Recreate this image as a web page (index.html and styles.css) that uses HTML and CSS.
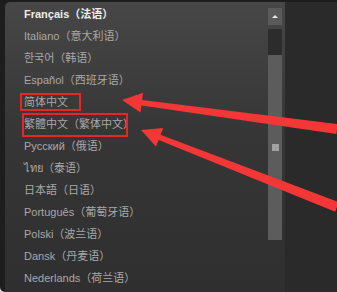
FILE: index.html
```html
<!DOCTYPE html>
<html lang="zh-CN">
<head>
<meta charset="utf-8">
<title>Language list</title>
<link rel="stylesheet" href="styles.css">
</head>
<body>
<div class="frame">
  <div class="panel">
    <ul class="list">
      <li class="item current">Français（法语）</li>
      <li class="item">Italiano（意大利语）</li>
      <li class="item">한국어（韩语）</li>
      <li class="item">Español（西班牙语）</li>
      <li class="item">简体中文</li>
      <li class="item">繁體中文（繁体中文）</li>
      <li class="item">Русский（俄语）</li>
      <li class="item">ไทย（泰语）</li>
      <li class="item">日本語（日语）</li>
      <li class="item">Português（葡萄牙语）</li>
      <li class="item">Polski（波兰语）</li>
      <li class="item">Dansk（丹麦语）</li>
      <li class="item">Nederlands（荷兰语）</li>
      <li class="item">Svenska（瑞典语）</li>
    </ul>
    <div class="scrollbar">
      <div class="sb-up"><span class="sb-arrow"></span></div>
      <div class="sb-track"></div>
      <div class="sb-thumb"><span class="grip"></span></div>
    </div>
  </div>
  <div class="side"></div>
</div>
<svg class="annot" width="337" height="292" viewBox="0 0 337 292">
  <rect x="21" y="94" width="59" height="16" fill="none" stroke="#ec2424" stroke-width="2"/>
  <rect x="23" y="114" width="104" height="22" fill="none" stroke="#ec2424" stroke-width="2"/>
  <polygon fill="#f33636" points="122,100 143.1,92.8 142.1,99.9 337.6,124 336.4,134 141.5,105.5 140.5,112.6"/>
  <polygon fill="#f33636" points="141,130 163.3,128 160.5,134.7 338.8,202.3 335.2,211.7 158.7,139.9 155.9,146.6"/>
</svg>
</body>
</html>
```
FILE: styles.css
```css
html, body {
  margin: 0;
  padding: 0;
}
body {
  width: 337px;
  height: 292px;
  overflow: hidden;
  background: #d8d8d8;
  position: relative;
  font-family: "Liberation Sans", "Noto Sans CJK SC", sans-serif;
}
.frame {
  display: flex;
  width: 337px;
  height: 292px;
  box-sizing: border-box;
  padding: 2px 0 0 5px;
  background: #1d1d1d;
  border-bottom-left-radius: 5px;
}
.panel {
  width: 280px;
  display: flex;
  background: linear-gradient(#474747 0%, #363636 45%, #2f2f2f 100%);
  border-top-left-radius: 5px;
  overflow: hidden;
}
.list {
  list-style: none;
  margin: 0;
  padding: 1px 0 0 19px;
  flex: 1;
}
.item {
  height: 22px;
  line-height: 22px;
  font-size: 11px;
  color: #a8a8a8;
  white-space: nowrap;
}
.item.current {
  color: #ececec;
  font-weight: bold;
}
.scrollbar {
  width: 14px;
  margin: 6px 3px 0 0;
  display: flex;
  flex-direction: column;
}
.sb-up {
  height: 17px;
  background: #5a5a5a;
  display: flex;
  align-items: center;
  justify-content: center;
}
.sb-arrow {
  width: 0;
  height: 0;
  border-left: 3px solid transparent;
  border-right: 3px solid transparent;
  border-bottom: 3px solid #e8e8e8;
}
.sb-track {
  height: 26px;
  margin-top: 4px;
  background: #2c2c2c;
}
.sb-thumb {
  height: 185px;
  background: #5c5c5c;
  display: flex;
  align-items: center;
  justify-content: center;
}
.grip {
  width: 7px;
  height: 7px;
  background-image: radial-gradient(circle, #c8c8c8 0.6px, transparent 0.9px);
  background-size: 2px 2px;
}
.side {
  flex: 1;
  background: #2a2a2a;
}
.annot {
  position: absolute;
  left: 0;
  top: 0;
}
```
